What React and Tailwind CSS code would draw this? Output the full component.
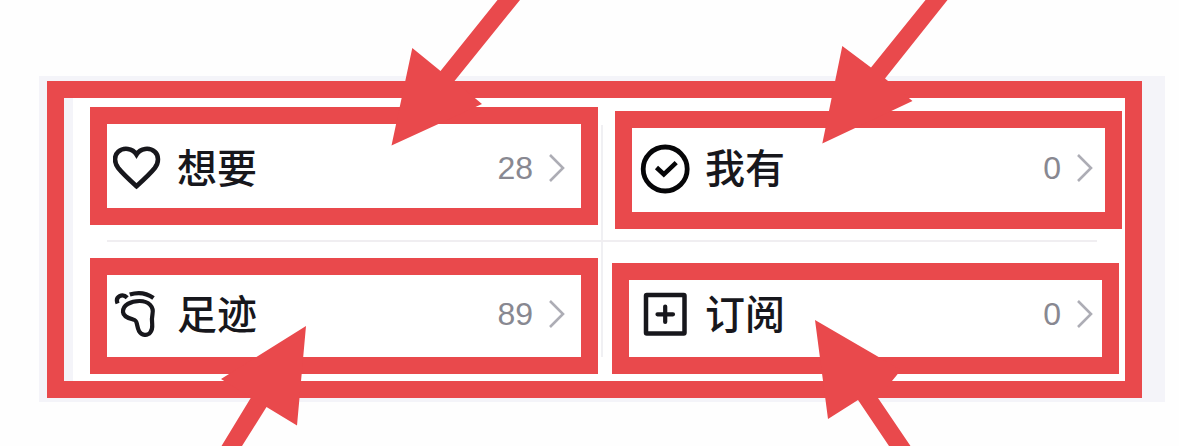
function HeartIcon() {
  return (
    <svg viewBox="0 0 48 48" className="size-12 shrink-0" fill="none" stroke="#17171c" strokeWidth="4.6" strokeLinejoin="miter" aria-hidden="true">
      <path d="M23.500 42.200C17.500 36.800 10 30 5.200 24C1 18.500 1 11.500 5.200 7.800C10.500 3 19.500 4 23.500 10.500C27.500 4 36.500 3 41.800 7.800C46 11.500 46 18.500 41.800 24C37 30 29.500 36.800 23.500 42.200Z" />
    </svg>
  );
}

function CheckIcon() {
  return (
    <svg viewBox="0 0 48 48" className="size-12 shrink-0 overflow-visible" fill="none" stroke="#060608" aria-hidden="true">
      <circle cx="24.2" cy="25" r="22" strokeWidth="4.800" />
      <path d="M15.500 23.500L22.800 30.300L35.200 18.600" strokeWidth="4.600" />
    </svg>
  );
}

function FootIcon() {
  return (
    <svg viewBox="0 0 48 48" className="size-12 shrink-0" fill="none" stroke="#17171c" strokeWidth="4.200" strokeLinecap="round" strokeLinejoin="round" aria-hidden="true">
      <path d="M4.600 13.500C1.800 6.500 9.500 2.800 14.200 7.800" strokeLinecap="butt" />
      <path d="M16.800 4.600C25 1.800 33.500 3 40.500 8" strokeLinecap="butt" />
      <path d="M10 22C9.500 15 18 11 26.500 11C36 11 41 17 39.500 24C38.600 28 38.800 30.500 39.200 34.500C39.800 41.500 36 45.300 31.500 44.800C25.500 44.200 24.800 38 23.800 33.500C23 30 22 30 19.500 29.300C14.500 28 10.300 26.500 10 22Z" />
    </svg>
  );
}

function PlusIcon() {
  return (
    <svg viewBox="0 0 48 48" className="size-12 shrink-0" fill="none" stroke="#17171c" strokeWidth="4.500" aria-hidden="true">
      <rect x="5" y="5" width="38.500" height="38.500" rx="0.800" />
      <path d="M24.200 16.500V32M16.500 24.300H32" strokeWidth="4.200" strokeLinecap="round" />
    </svg>
  );
}

function Chevron() {
  return (
    <svg viewBox="0 0 16 28" className="h-7 w-4 shrink-0" fill="none" stroke="#adadb5" strokeWidth="2.600" aria-hidden="true">
      <path d="M1 1L14 14L1 27" />
    </svg>
  );
}

function Entry({ icon, label, count, className }) {
  return (
    <a href="#" className={`flex min-w-0 flex-1 items-center border-[17px] border-[#e9494c] bg-white ${className}`}>
      {icon}
      <span className="ml-4 pb-1 text-[40px] leading-[44px] font-medium whitespace-nowrap text-[#17171c]">{label}</span>
      <span className="ml-auto font-['Liberation_Sans',sans-serif] text-[32px] leading-[48px] text-[#888891]">{count}</span>
      <span className="ml-4">
        <Chevron />
      </span>
    </a>
  );
}

function Arrows() {
  return (
    <svg viewBox="0 0 1179 446" className="pointer-events-none absolute inset-x-0 top-0 w-full" fill="#e9494c" aria-hidden="true">
      <path d="M391.500 145.500L412.300 48L440.500 71L497.500 0H520L454.500 81L482 104Z" />
      <path d="M822.300 143.500L842.300 46L871 67.500L925.500 0H947.500L885 78.500L912.500 101Z" />
      <path d="M306 326L297 425.500L266.500 407L242 446H221.500L251 397.500L221 379Z" />
      <path d="M815 320L828 419L858 400L889 446H910.500L878 398L901 370Z" />
    </svg>
  );
}

export default function App() {
  return (
    <div className="relative min-h-screen overflow-hidden bg-[#fefefe] pt-[76px] pr-[14px] pb-11 pl-[39px] font-['Noto_Sans_CJK_SC',sans-serif]">
      <main className="bg-[#f4f4f9] pt-[5px] pr-[23px] pb-1 pl-2">
        <div className="border-[17px] border-[#e9494c] pl-[9px]">
          <div className="bg-white pl-[17px]">
            <div className="flex items-start pt-[9px] pr-[3px]">
              <Entry icon={<HeartIcon />} label="想要" count="28" className="mb-[15px] pt-5 pr-4 pb-4 pl-[6px]" />
              <div className="mt-[18px] ml-[3px] w-[2px] self-stretch bg-[#f0f0f3]" />
              <Entry icon={<CheckIcon />} label="我有" count="0" className="mt-1 mb-[10px] ml-3 pt-4 pr-3 pb-5 pl-[9px]" />
            </div>
            <div className="mr-7 ml-[17px] h-[2px] bg-[#f0eef1]" />
            <div className="flex items-start pt-4 pr-[6px] pb-[7px]">
              <Entry icon={<FootIcon />} label="足迹" count="89" className="pt-[15px] pr-4 pb-[19px] pl-[6px]" />
              <div className="-mt-4 mb-[17px] ml-[3px] w-[2px] self-stretch bg-[#f0f0f3]" />
              <Entry icon={<PlusIcon />} label="订阅" count="0" className="mt-[5px] ml-[9px] pt-[10px] pr-[9px] pb-[19px] pl-3" />
            </div>
          </div>
        </div>
      </main>
      <Arrows />
    </div>
  );
}
